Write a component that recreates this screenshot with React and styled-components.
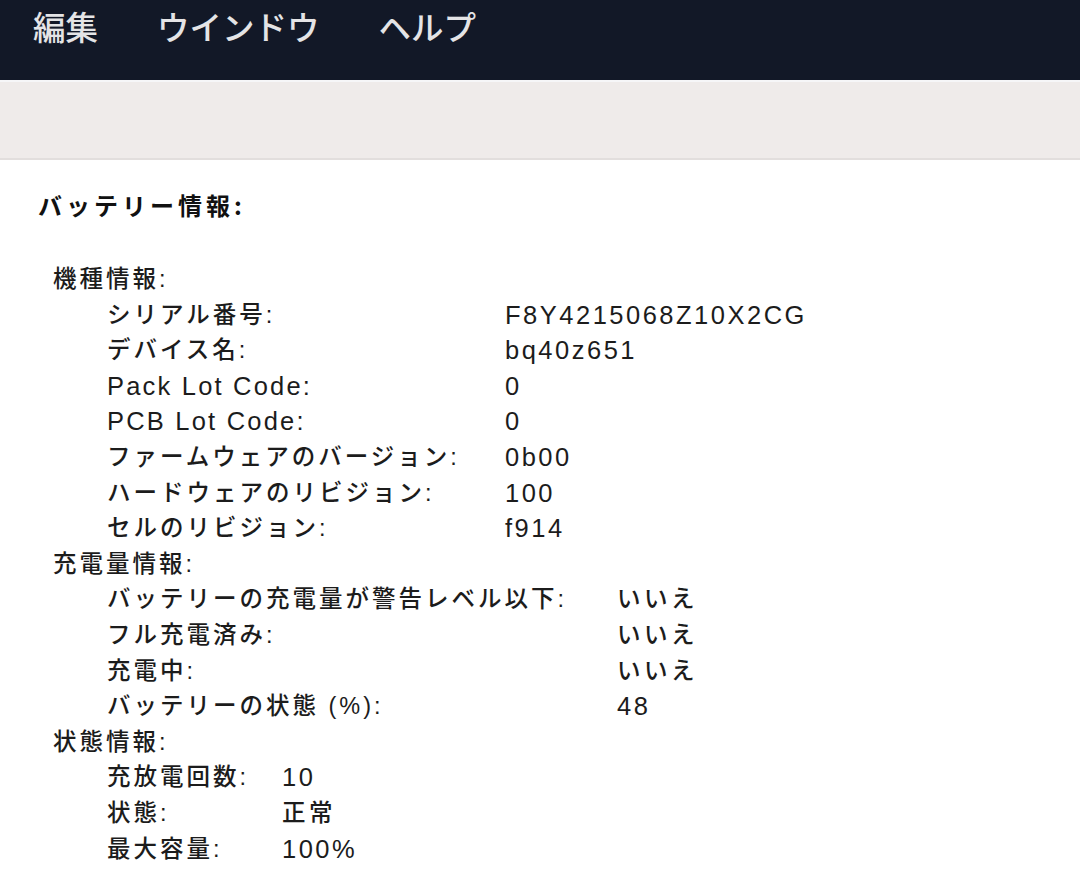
import styled, { createGlobalStyle } from "styled-components";

const GlobalStyle = createGlobalStyle`
  html, body {
    margin: 0;
    padding: 0;
    background: #fff;
  }
  body {
    font-family: "Liberation Sans", "Noto Sans CJK JP", sans-serif;
    color: #1c1c1c;
  }
`;

const MenuBar = styled.div`
  display: flex;
  align-items: flex-start;
  gap: 59px;
  height: 80px;
  padding: 4px 33px 0;
  box-sizing: border-box;
  background: #121827;
  .item {
    font-family: "Noto Sans CJK JP", sans-serif;
    font-size: 32.5px;
    font-weight: 500;
    line-height: 44px;
    color: #e4e4e6;
  }
`;

const Toolbar = styled.div`
  height: 80px;
  box-sizing: border-box;
  background: #efebea;
  border-top: 2px solid #f6f6f8;
  border-bottom: 2px solid #e2dedd;
`;

const Content = styled.div`
  padding: 27px 0 0 38px;
`;

const Title = styled.div`
  font-family: "Noto Sans CJK JP", sans-serif;
  font-weight: 700;
  font-size: 24px;
  letter-spacing: 4px;
  line-height: 36px;
  color: #111;
`;

const Sections = styled.div`
  margin-top: 39px;
  padding-left: 15px;
`;

const Section = styled.div`
  display: grid;
  grid-template-columns: ${(p) => p.$labelWidth + 54}px auto;
  line-height: 35.6px;
  font-size: 23.5px;
  font-weight: 500;
  letter-spacing: 3px;
  .head {
    grid-column: 1 / -1;
  }
  .label {
    padding-left: 54px;
    white-space: nowrap;
  }
  .label.latin {
    font-size: 25.5px;
    letter-spacing: 2.2px;
  }
  .value {
    font-size: 25.5px;
    letter-spacing: 2.5px;
    white-space: nowrap;
  }
  .value.cjk {
    font-size: 23.5px;
    letter-spacing: 3.5px;
  }
`;

const sections = [
  {
    title: "機種情報:",
    labelWidth: 398,
    rows: [
      ["シリアル番号:", "F8Y4215068Z10X2CG"],
      ["デバイス名:", "bq40z651"],
      ["Pack Lot Code:", "0"],
      ["PCB Lot Code:", "0"],
      ["ファームウェアのバージョン:", "0b00"],
      ["ハードウェアのリビジョン:", "100"],
      ["セルのリビジョン:", "f914"],
    ],
  },
  {
    title: "充電量情報:",
    labelWidth: 510,
    rows: [
      ["バッテリーの充電量が警告レベル以下:", "いいえ"],
      ["フル充電済み:", "いいえ"],
      ["充電中:", "いいえ"],
      ["バッテリーの状態 (%):", "48"],
    ],
  },
  {
    title: "状態情報:",
    labelWidth: 175,
    rows: [
      ["充放電回数:", "10"],
      ["状態:", "正常"],
      ["最大容量:", "100%"],
    ],
  },
];

const isLatin = (text) => /^[\x20-\x7e]+$/.test(text);

const App = () => {
  return (
    <>
      <GlobalStyle />
      <MenuBar>
        <span className="item">編集</span>
        <span className="item">ウインドウ</span>
        <span className="item">ヘルプ</span>
      </MenuBar>
      <Toolbar />
      <Content>
        <Title>バッテリー情報:</Title>
        <Sections>
          {sections.map((s) => (
            <Section key={s.title} $labelWidth={s.labelWidth}>
              <div className="head">{s.title}</div>
              {s.rows.map(([label, value]) => [
                <div className={isLatin(label) ? "label latin" : "label"} key={label}>
                  {label}
                </div>,
                <div className={isLatin(value) ? "value" : "value cjk"} key={label + "v"}>
                  {value}
                </div>,
              ])}
            </Section>
          ))}
        </Sections>
      </Content>
    </>
  );
};

export default App;
